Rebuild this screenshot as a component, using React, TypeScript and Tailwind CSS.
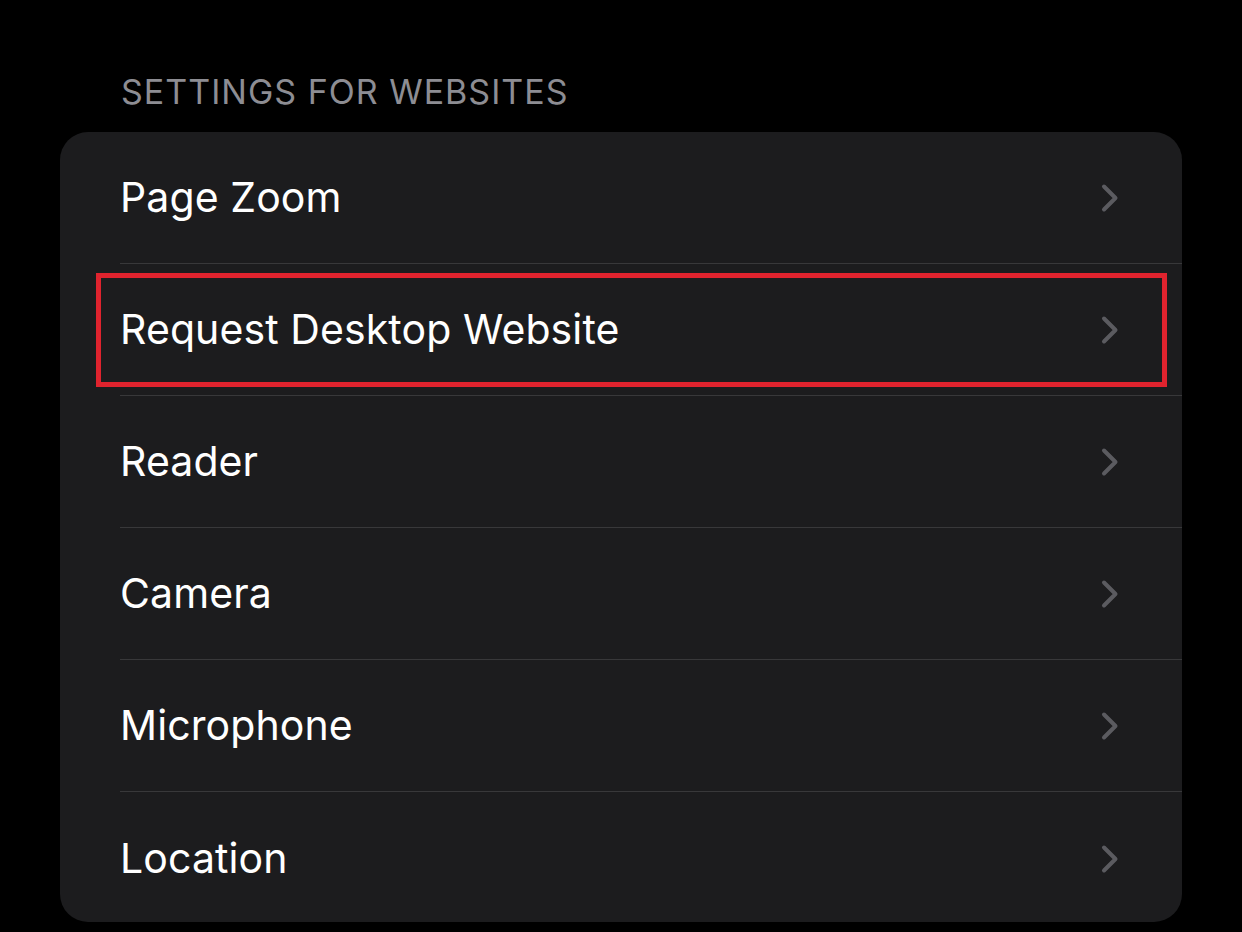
const rows = ['Page Zoom', 'Request Desktop Website', 'Reader', 'Camera', 'Microphone', 'Location'];

function Chevron() {
  return (
    <svg width="18" height="30" viewBox="0 0 18 30" fill="none">
      <path d="M3 3.5 L14.5 15 L3 26.5" stroke="#5b5b60" strokeWidth="4" strokeLinecap="round" strokeLinejoin="round" />
    </svg>
  );
}

export default function App() {
  return (
    <div
      className="min-h-screen w-full bg-black pt-[72px] px-[60px] overflow-hidden"
      style={{ fontFamily: 'Inter, "Noto Sans", sans-serif' }}
    >
      <div className="pl-[61px] h-[40px] text-[34px] leading-[40px] text-[#8d8d93] tracking-[1px]">
        SETTINGS FOR WEBSITES
      </div>
      <div className="relative mt-[20px] h-[790px] rounded-[28px] bg-[#1c1c1e] overflow-hidden">
        {rows.map((label, i) => (
          <div key={label} className="flex h-[132px] pl-[60px]">
            <div
              className={`flex flex-1 items-center justify-between pr-[63px] pt-[1px] ${
                i < rows.length - 1 ? 'border-b border-[#38383a]' : ''
              }`}
            >
              <span className="text-[41px] text-white tracking-[0.1px]">{label}</span>
              <Chevron />
            </div>
          </div>
        ))}
        <div className="absolute left-[36px] top-[141px] w-[1071px] h-[114px] border-[5px] border-[#e0232e]" />
      </div>
    </div>
  );
}
